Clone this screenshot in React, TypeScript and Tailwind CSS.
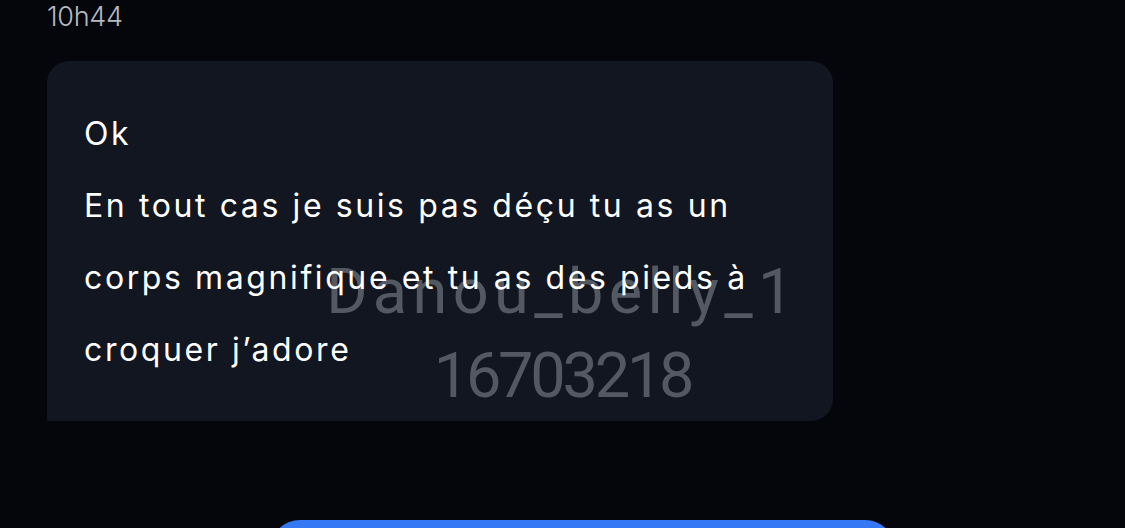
const lines = ["Ok", "En tout cas je suis pas déçu tu as un corps magnifique et tu as des pieds à croquer j’adore"];

const Watermark = () => {
  return (
    <div className="pointer-events-none absolute inset-x-0 top-[250px] z-10 text-center font-['Roboto',sans-serif] text-[63px] leading-[84px] text-[#5b606a]/90">
      <div className="tracking-[5.4px]">Danou_belly_1</div>
      <div className="tracking-[-3.2px]">16703218</div>
    </div>
  );
};

export default function App() {
  return (
    <div className="relative h-[528px] w-[1125px] overflow-hidden bg-[#05060b] font-['Inter',sans-serif]">
      <div className="flex flex-col pl-[47px]">
        <span className="pt-[1px] text-[27px] leading-[32px] font-light tracking-[-0.3px] text-[#b5b9c1]">10h44</span>

        <div className="mt-[28px] w-[786px] rounded-t-[22px] rounded-br-[22px] bg-[#121620] px-[37px] pt-[37px] pb-[35px]">
          {lines.map((t, i) => (
            <p key={i} className="relative z-20 text-[32px] leading-[72px] tracking-[2.6px] text-white">
              {t}
            </p>
          ))}
        </div>
      </div>

      <Watermark />

      <div className="mt-[99px] flex justify-center pl-[40px]">
        <button className="h-[60px] w-[625px] rounded-[32px] bg-[#3478f6]" />
      </div>
    </div>
  );
}
